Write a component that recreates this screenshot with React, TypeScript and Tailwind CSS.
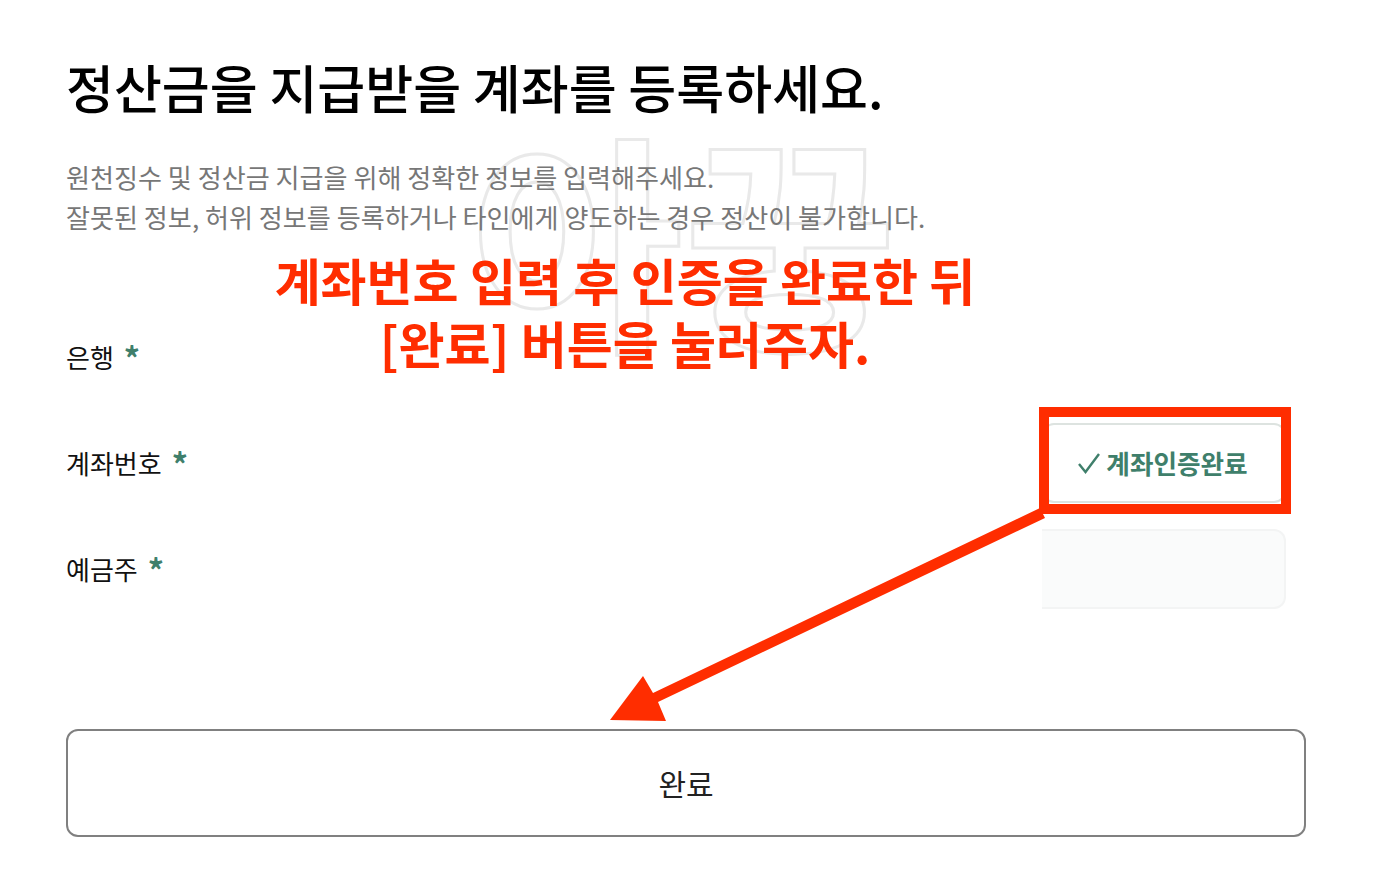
const font = "font-['Noto_Sans_CJK_KR','Noto_Sans',sans-serif]"

function Label({ text }: { text: string }) {
	return (
		<div className="flex items-center gap-[10px] text-[26px] leading-10 text-[#111]">
			<span>{text}</span>
			<span className="text-[32px] font-bold leading-10 text-[#3f7f6b]">*</span>
		</div>
	)
}

function Annotation() {
	return (
		<>
			<div className="absolute left-[1039px] top-[407px] h-[107px] w-[252px] border-[10px] border-[#ff2d00]" />
			<svg className="absolute left-0 top-0" width="1374" height="896" viewBox="0 0 1374 896">
				<polygon points="1040,508 1045,518 658,702 666,721 610,720 643,676 653,693" fill="#ff2d00" />
			</svg>
			<div className="absolute left-[175px] top-[248px] w-[900px] text-center text-[50px] font-bold leading-[63px] text-[#ff2d00]">
				<div>계좌번호 입력 후 인증을 완료한 뒤</div>
				<div>[완료] 버튼을 눌러주자.</div>
			</div>
		</>
	)
}

export default function App() {
	return (
		<div className={`relative h-[896px] overflow-hidden bg-white ${font}`}>
			<div className="pointer-events-none absolute left-[470px] top-[118px] text-[232px] font-bold leading-[230px] text-transparent [-webkit-text-stroke:3px_#e9e9e9]">
				아꿍
			</div>
			<div className="relative pl-[66px] pr-[68px] pt-[51px]">
				<h1 className="text-[52.1px] font-medium leading-[72px] text-black">정산금을 지급받을 계좌를 등록하세요.</h1>
				<p className="mt-[34px] text-[26.1px] leading-10 text-[#777]">
					원천징수 및 정산금 지급을 위해 정확한 정보를 입력해주세요.
					<br />
					잘못된 정보, 허위 정보를 등록하거나 타인에게 양도하는 경우 정산이 불가합니다.
				</p>
				<div className="mt-[80px] flex flex-col gap-[26px] pr-5">
					<div className="flex h-20 items-center justify-between">
						<Label text="은행" />
					</div>
					<div className="flex h-20 items-center justify-between">
						<Label text="계좌번호" />
						<div className="flex h-20 w-[244px] items-center justify-center gap-1 rounded-xl border-2 border-[#dde3e0] bg-white pr-1 text-[25.6px] font-bold text-[#3f7f6b]">
							<svg width="26" height="26" viewBox="0 0 26 26" fill="none" stroke="#3f7f6b" strokeWidth="2.4">
								<path d="M3 14l6.5 8L23 4" />
							</svg>
							계좌인증완료
						</div>
					</div>
					<div className="flex h-20 items-center justify-between">
						<Label text="예금주" />
						<div className="h-20 w-[244px] rounded-r-xl border-2 border-l-0 border-[#f3f4f4] bg-[#fafbfb]" />
					</div>
				</div>
				<button className="mt-[120px] flex h-[108px] w-full items-center justify-center rounded-xl border-2 border-[#808080] bg-white text-[30px] text-[#222]">
					완료
				</button>
			</div>
			<Annotation />
		</div>
	)
}
